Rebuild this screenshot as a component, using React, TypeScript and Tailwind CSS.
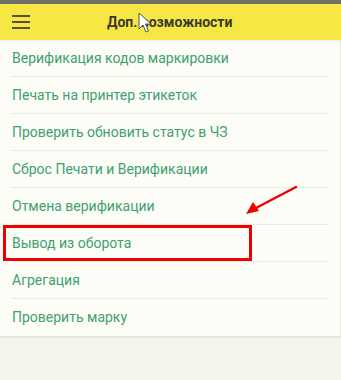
import React from "react";

const items = [
  "Верификация кодов маркировки",
  "Печать на принтер этикеток",
  "Проверить обновить статус в ЧЗ",
  "Сброс Печати и Верификации",
  "Отмена верификации",
  "Вывод из оборота",
  "Агрегация",
  "Проверить марку",
];

export default function App() {
  return (
    <div
      className="relative w-[341px] h-[380px] overflow-hidden bg-[#f3f6ec] flex flex-col"
      style={{ fontFamily: "Roboto, 'Noto Sans', sans-serif" }}
    >
      <div className="h-[4px] bg-[#6f6f66]" />
      <div className="h-[36px] bg-[#f6e744] flex items-center relative shadow-[0_1px_2px_rgba(0,0,0,0.08)]">
        <div className="w-[42px] flex flex-col items-start pl-[12px] gap-[4px]">
          <div className="w-[18px] h-[2px] bg-[#55533a]" />
          <div className="w-[18px] h-[2px] bg-[#55533a]" />
          <div className="w-[18px] h-[2px] bg-[#55533a]" />
        </div>
        <div className="flex-1 pl-[65px] text-[14px] font-bold text-[#3b3a2c]">Доп. возможности</div>
        {/* mouse cursor */}
        <svg className="absolute left-[138px] top-[8px]" width="14" height="22" viewBox="0 0 14 22">
          <path d="M1 1 L1 17 L5 13 L8 20 L10.5 19 L7.5 12 L13 12 Z" fill="#ffffff" stroke="#555" strokeWidth="1" />
        </svg>
      </div>
      <div className="bg-[#fcfdf6] border-b-2 border-[#e6e9de] border-r border-r-[#e9ece2]">
        {items.map((t, i) => (
          <div key={t} className="px-[11px]">
            <div
              className={`h-[37px] flex items-center pl-[1px] text-[14px] text-[#41a06f] ${
                i < items.length - 1 ? "border-b border-[#e8ebe1]" : ""
              }`}
            >
              {t}
            </div>
          </div>
        ))}
      </div>

      {/* annotation overlays */}
      <div className="absolute left-[3px] top-[225px] w-[249px] h-[36px] border-[3px] border-[#f00000]" />
      <svg className="absolute left-0 top-0 pointer-events-none" width="341" height="380">
        <line x1="296" y1="187" x2="256" y2="208" stroke="#f00000" strokeWidth="2.5" strokeLinecap="round" />
        <path d="M246 214 L253 202 L259 211 Z" fill="#f00000" />
      </svg>
    </div>
  );
}
